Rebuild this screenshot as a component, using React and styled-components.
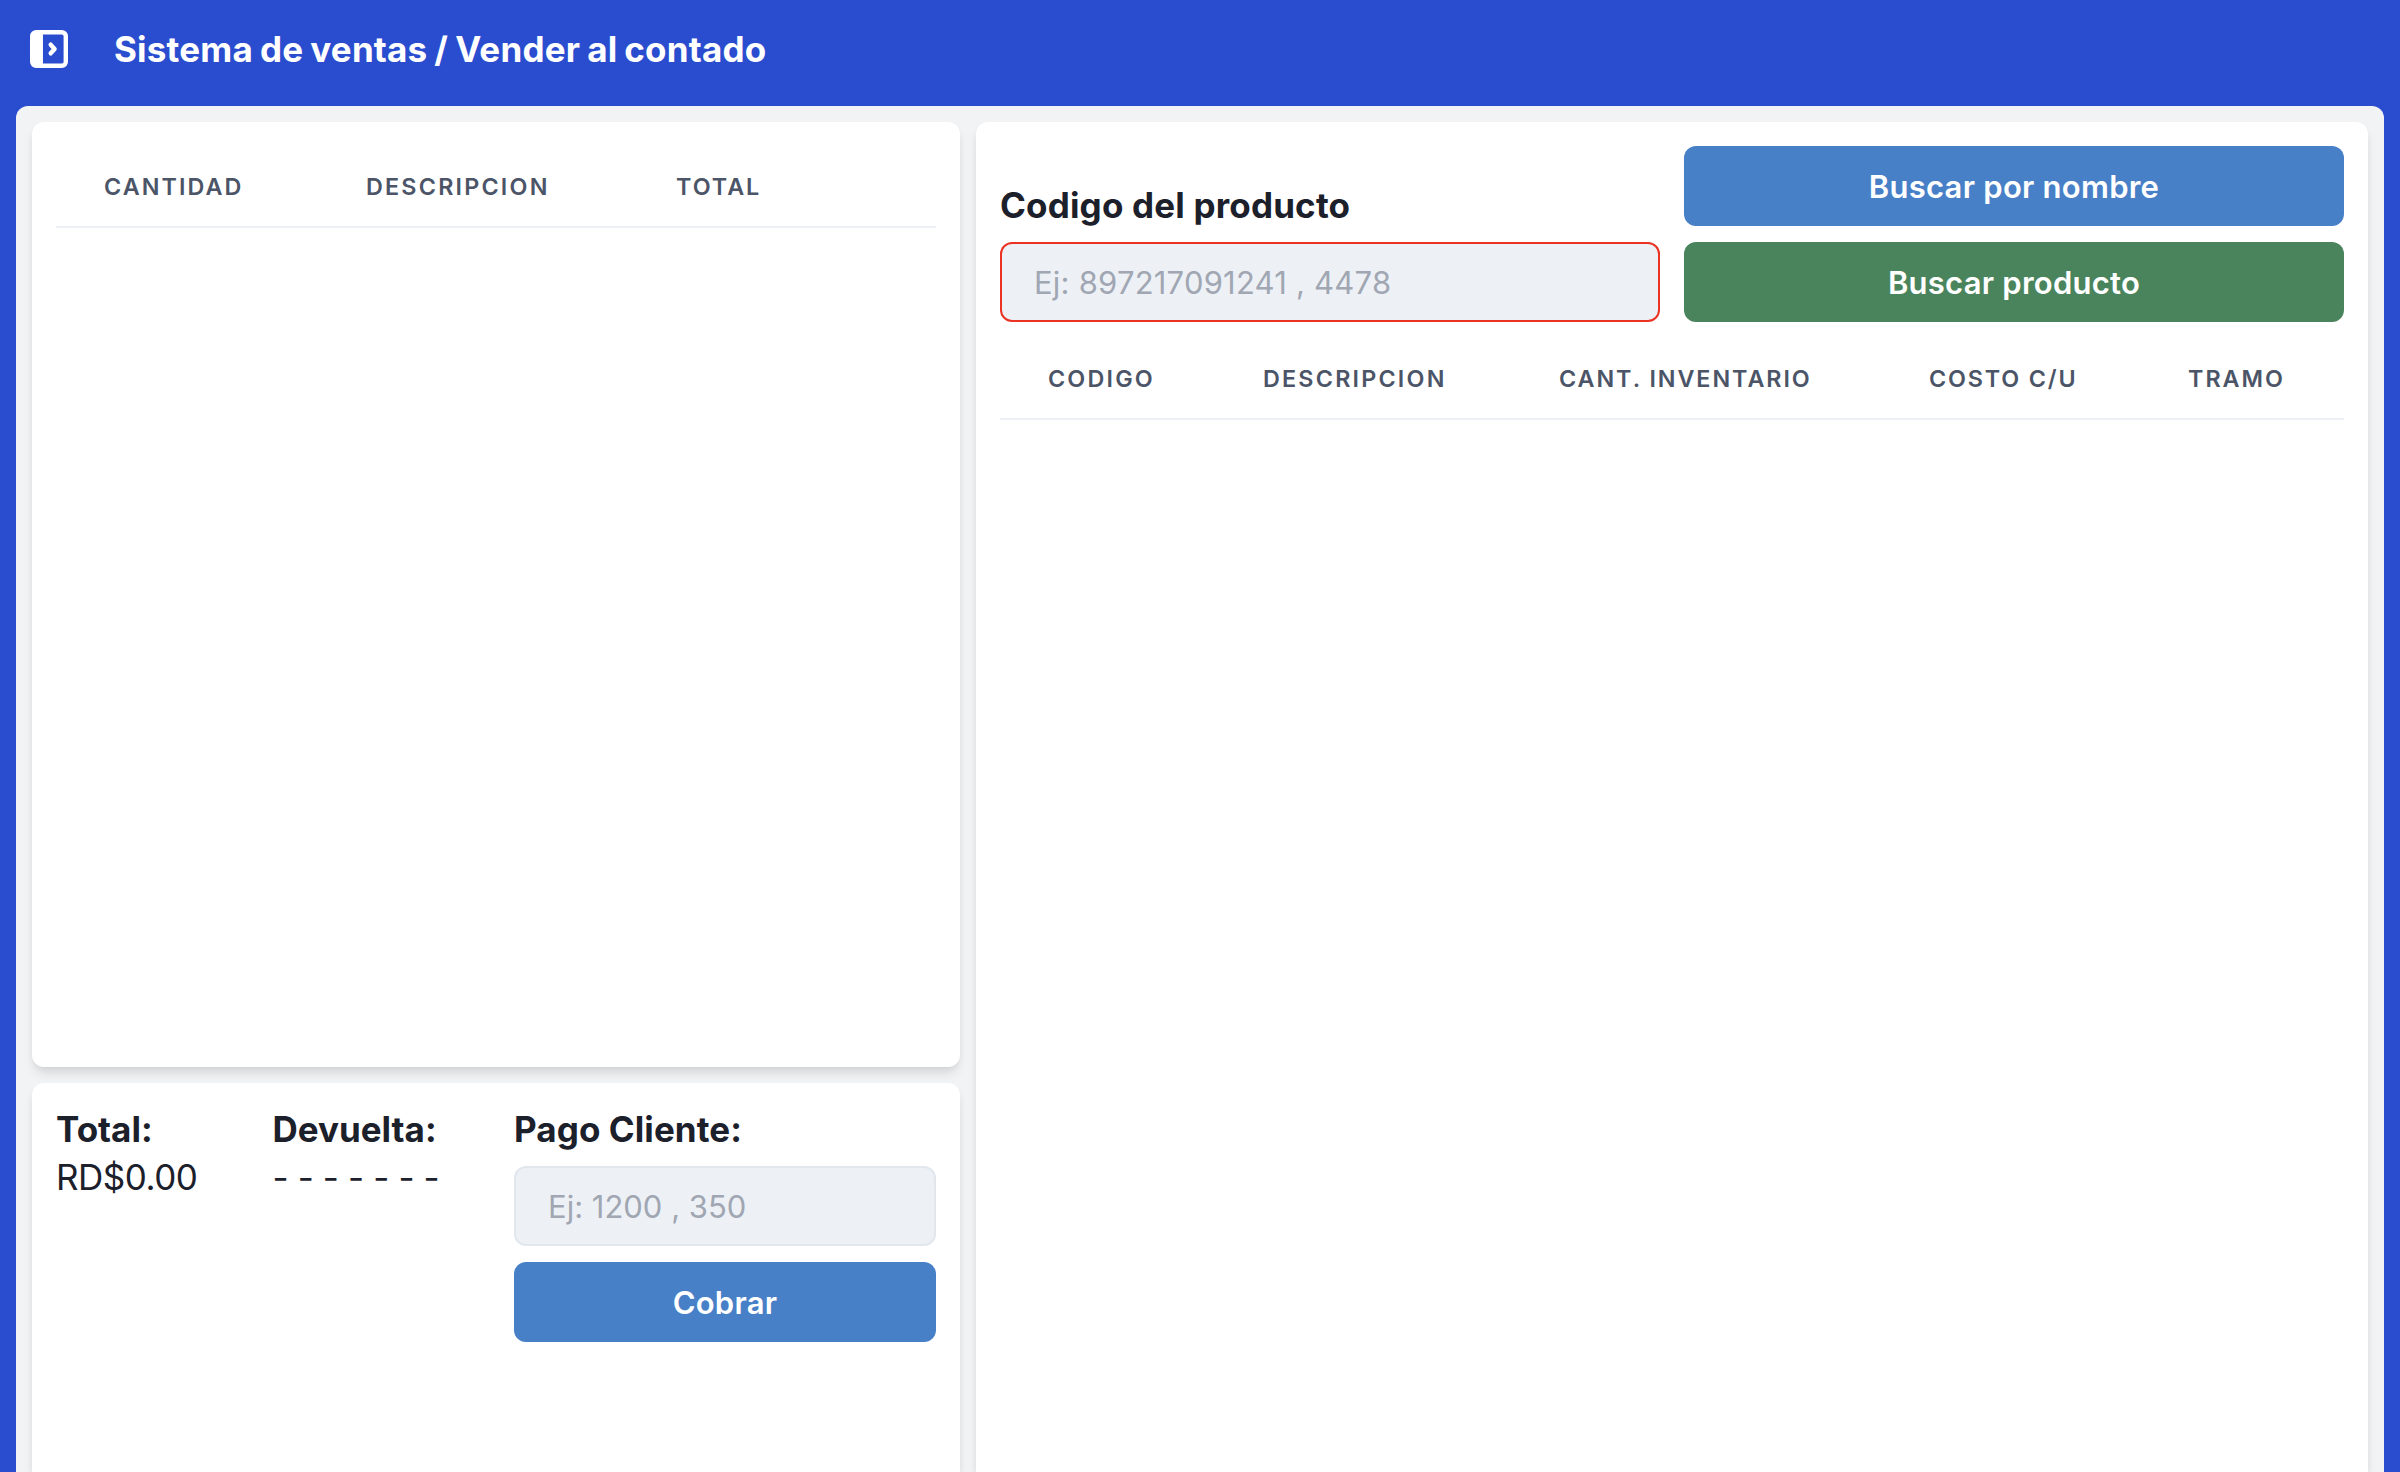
import React from "react";
import styled, { createGlobalStyle } from "styled-components";

const GlobalStyle = createGlobalStyle`
  *, *::before, *::after { box-sizing: border-box; }
  body {
    margin: 0;
    background: #2a4dd0;
    color: #1c202b;
    font-family: Inter, "Liberation Sans", sans-serif;
  }
  h1, h2, p { margin: 0; }
`;

const Page = styled.div`
  display: flex;
  flex-direction: column;
  height: 100vh;
  overflow: hidden;
`;

const TopBar = styled.header`
  display: flex;
  flex: none;
  align-items: center;
  gap: 46px;
  height: 106px;
  padding: 0 30px 8px;
  color: #fff;
`;

const MenuButton = styled.button`
  display: flex;
  padding: 0;
  border: 0;
  background: none;
  color: inherit;
`;

const Title = styled.h1`
  font-size: 35px;
  font-weight: 700;
  line-height: 48px;
  letter-spacing: 0.2px;
  word-spacing: -1.5px;
  white-space: nowrap;
`;

const Workspace = styled.main`
  display: grid;
  flex: 1;
  min-height: 0;
  grid-template-columns: 2fr 3fr;
  grid-template-rows: 945px 1fr;
  gap: 16px;
  margin: 0 16px;
  padding: 16px 16px 0;
  border-radius: 12px 12px 0 0;
  background: #f2f3f5;
  overflow: hidden;
`;

const Card = styled.section`
  min-width: 0;
  padding: 24px;
  border-radius: ${(p) => (p.$cutOff ? "12px 12px 0 0" : "12px")};
  grid-row: ${(p) => (p.$tall ? "1 / span 2" : "auto")};
  grid-column: ${(p) => (p.$tall ? 2 : 1)};
  background: #fff;
  box-shadow: 0 8px 12px -2px rgba(0, 0, 0, 0.1), 0 4px 8px -2px rgba(0, 0, 0, 0.06);
`;

const Table = styled.table`
  width: 100%;
  table-layout: fixed;
  border-collapse: separate;
  border-spacing: 0;
`;

const HeadCell = styled.th`
  width: ${(p) => p.$width};
  padding: 25px 0 23px 48px;
  border-bottom: 2px solid #edf1f6;
  color: #4b5567;
  font-size: 23.3px;
  font-weight: 600;
  line-height: 32px;
  letter-spacing: ${(p) => p.$tracking}px;
  text-align: left;
  white-space: nowrap;
`;

const SearchGrid = styled.div`
  display: grid;
  grid-template-columns: 1fr 1fr;
  gap: 16px 24px;
  align-items: end;
  margin-bottom: 16px;
`;

const Label = styled.h2`
  font-size: 35px;
  font-weight: 700;
  line-height: 48px;
  letter-spacing: ${(p) => p.$tracking || 0}px;
  white-space: nowrap;
`;

const SearchLabel = styled(Label)`
  line-height: 42px;
`;

const Value = styled.p`
  font-size: 35px;
  line-height: 48px;
  letter-spacing: ${(p) => p.$tracking}px;
  white-space: nowrap;
`;

const Field = styled.input`
  display: block;
  width: 100%;
  height: 80px;
  padding: 0 32px;
  border: 2px solid ${(p) => (p.$invalid ? "#eb3323" : "#e2e7ee")};
  border-radius: 12px;
  outline: none;
  background: #edf1f6;
  color: inherit;
  font-family: inherit;
  font-size: 31px;
  letter-spacing: ${(p) => p.$tracking || 0}px;

  &::placeholder {
    color: #a0a6b2;
    opacity: 1;
  }
`;

const Button = styled.button`
  display: flex;
  align-items: center;
  justify-content: center;
  width: 100%;
  height: 80px;
  padding: 0 32px;
  border: 0;
  border-radius: 12px;
  background: ${(p) => (p.$tone === "green" ? "#4a845d" : "#4780c7")};
  color: #fff;
  font-family: inherit;
  font-size: 31px;
  font-weight: 600;
  letter-spacing: 0.25px;
`;

const Checkout = styled.div`
  display: grid;
  grid-template-columns: 192.5px 217.5px 1fr;
  column-gap: 24px;
  align-items: start;
  margin-top: -2px;
`;

const Payment = styled.div`
  display: flex;
  flex-direction: column;
  gap: 16px;
`;

const PaymentLabel = styled(Label)`
  margin-bottom: -3px;
`;

function SidebarIcon() {
  return (
    <svg width="38" height="38" viewBox="0 0 38 38" fill="none">
      <rect x="2.2" y="2.2" width="33.6" height="33.6" rx="4" stroke="currentColor" strokeWidth="4.4" />
      <rect x="2" y="2" width="10.8" height="34" rx="3" fill="currentColor" />
      <path d="M8 2h4.8v34H8z" fill="currentColor" />
      <path
        d="M20.7 14.7 24.6 19l-3.9 4.3"
        stroke="currentColor"
        strokeWidth="4.4"
        strokeLinecap="round"
        strokeLinejoin="round"
      />
    </svg>
  );
}

const cartColumns = [
  { name: "CANTIDAD", width: "262px", tracking: 2.1 },
  { name: "DESCRIPCION", width: "310px", tracking: 2.22 },
  { name: "TOTAL", width: "auto", tracking: 2 },
];

const productColumns = [
  { name: "CODIGO", width: "215px", tracking: 2.2 },
  { name: "DESCRIPCION", width: "296px", tracking: 2.22 },
  { name: "CANT. INVENTARIO", width: "370px", tracking: 1.96 },
  { name: "COSTO C/U", width: "259px", tracking: 1.85 },
  { name: "TRAMO", width: "auto", tracking: 2 },
];

function ListHeader({ columns }) {
  return (
    <Table>
      <thead>
        <tr>
          {columns.map((c) => (
            <HeadCell key={c.name} $width={c.width} $tracking={c.tracking}>
              {c.name}
            </HeadCell>
          ))}
        </tr>
      </thead>
    </Table>
  );
}

export default function App() {
  return (
    <Page>
      <GlobalStyle />
      <TopBar>
        <MenuButton aria-label="Menu">
          <SidebarIcon />
        </MenuButton>
        <Title>Sistema de ventas / Vender al contado</Title>
      </TopBar>
      <Workspace>
        <Card>
          <ListHeader columns={cartColumns} />
        </Card>
        <Card $tall $cutOff>
          <SearchGrid>
            <SearchLabel $tracking={0.18}>Codigo del producto</SearchLabel>
            <Button>Buscar por nombre</Button>
            <Field $invalid $tracking={0.22} placeholder="Ej: 897217091241 , 4478" />
            <Button $tone="green">Buscar producto</Button>
          </SearchGrid>
          <ListHeader columns={productColumns} />
        </Card>
        <Card $cutOff>
          <Checkout>
            <div>
              <Label>Total:</Label>
              <Value $tracking={-0.5}>RD$0.00</Value>
            </div>
            <div>
              <Label>Devuelta:</Label>
              <Value $tracking={-0.38}>- - - - - - -</Value>
            </div>
            <Payment>
              <PaymentLabel $tracking={0.08}>Pago Cliente:</PaymentLabel>
              <Field placeholder="Ej: 1200 , 350" />
              <Button>Cobrar</Button>
            </Payment>
          </Checkout>
        </Card>
      </Workspace>
    </Page>
  );
}
